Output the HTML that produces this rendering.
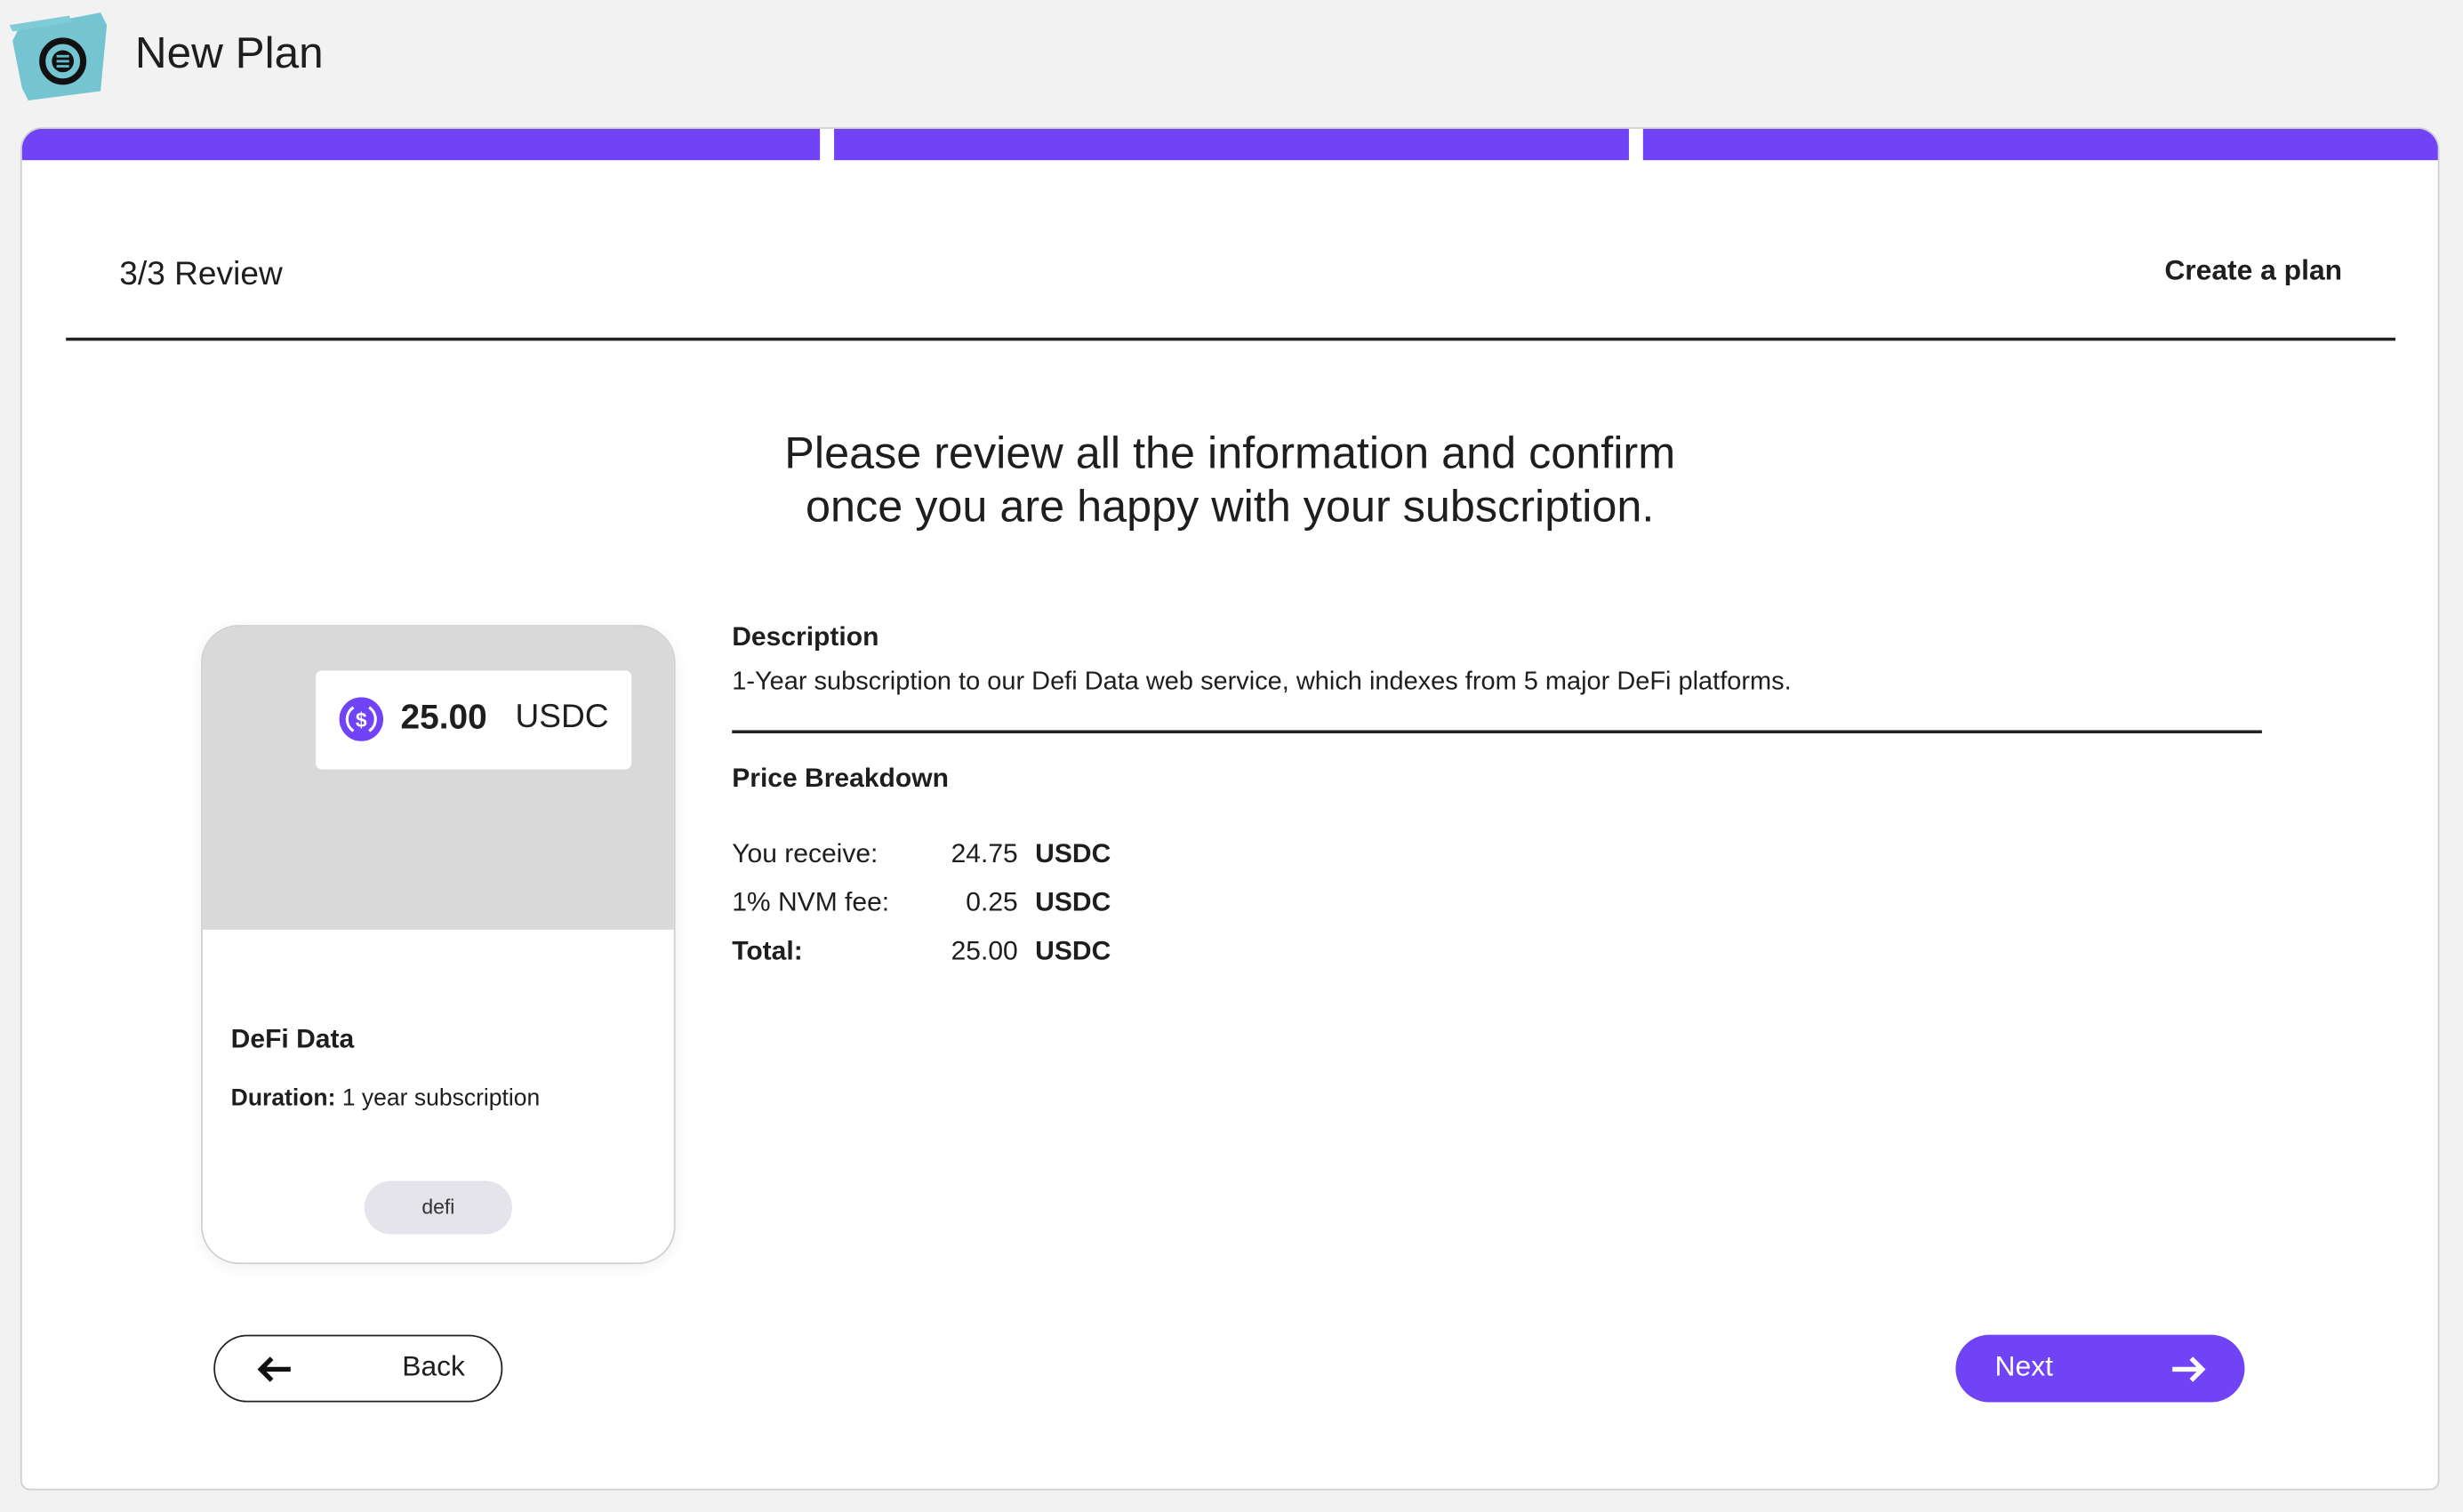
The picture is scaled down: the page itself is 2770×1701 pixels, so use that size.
<!DOCTYPE html>
<html><head><meta charset="utf-8"><style>
html,body{margin:0;padding:0;width:2770px;height:1700px;overflow:hidden;background:#f2f2f2;}
#w{position:absolute;left:0;top:0;width:1568px;height:963px;transform:scale(1.76658);transform-origin:0 0;font-family:"Liberation Sans",sans-serif;color:#1e1e1e;}
.a{position:absolute;white-space:nowrap;}
</style></head><body><div id="w">
<svg class="a" style="left:4px;top:6px" width="66" height="60" viewBox="0 0 66 60">
<path d="M8 12 L60 2 L64 10 L60 52 L14 58 L10 50 L4 20 Z" fill="#5fbccb" opacity=".85"/>
<path d="M2 10 L40 4 L42 8 L4 14Z" fill="#7fcbd6"/>
<circle cx="36" cy="33" r="13" fill="none" stroke="#111" stroke-width="4"/>
<circle cx="36" cy="33" r="7" fill="#111"/>
<rect x="32" y="29" width="8" height="1.6" fill="#5fbccb"/><rect x="32" y="32.2" width="8" height="1.6" fill="#5fbccb"/><rect x="32" y="35.4" width="8" height="1.6" fill="#5fbccb"/>
</svg>
<div class="a" style="left:86px;top:18px;font-size:28px;">New Plan</div>
<div class="a" style="left:13px;top:81px;width:1538px;height:866px;background:#fff;border:1px solid #cfcfcf;border-radius:14px 14px 6px 6px;overflow:hidden;">
<div class="a" style="left:0;top:0;width:508px;height:20px;background:#7043f6"></div>
<div class="a" style="left:517px;top:0;width:506px;height:20px;background:#7043f6"></div>
<div class="a" style="left:1032px;top:0;width:510px;height:20px;background:#7043f6"></div>
</div>
<div class="a" style="left:76px;top:163px;font-size:21px;">3/3 Review</div>
<div class="a" style="left:1378px;top:162px;font-size:18px;font-weight:bold;">Create a plan</div>
<div class="a" style="left:42px;top:215px;width:1483px;height:2px;background:#222"></div>
<div class="a" style="left:383px;top:272px;width:800px;text-align:center;font-size:28.5px;line-height:34px;white-space:normal;">Please review all the information and confirm<br>once you are happy with your subscription.</div>
<div class="a" style="left:128px;top:398px;width:300px;height:405px;border:1px solid #d0d0d0;border-radius:24px;overflow:hidden;background:#fff;box-shadow:0 2px 10px rgba(0,0,0,.06);">
<div class="a" style="left:0;top:0;width:300px;height:193px;background:#d9d9d9"></div>
<div class="a" style="left:72px;top:28px;width:201px;height:63px;background:#fff;border-radius:4px;"></div>
<svg class="a" style="left:87px;top:45px" width="28" height="28" viewBox="0 0 28 28"><circle cx="14" cy="14" r="14" fill="#7043f6"/><path d="M9 6.5 A9 9 0 0 0 9 21.5 M19 6.5 A9 9 0 0 1 19 21.5" fill="none" stroke="#fff" stroke-width="1.8"/><text x="14" y="19" text-anchor="middle" font-size="13" font-weight="bold" fill="#fff" font-family="Liberation Sans">$</text></svg>
<div class="a" style="left:126px;top:45px;font-size:22px;font-weight:bold;">25.00</div>
<div class="a" style="left:199px;top:46px;font-size:21px;">USDC</div>
<div class="a" style="left:18px;top:253px;font-size:17px;font-weight:bold;">DeFi Data</div>
<div class="a" style="left:18px;top:292px;font-size:15px;"><b>Duration:</b> 1 year subscription</div>
<div class="a" style="left:103px;top:353px;width:94px;height:34px;border-radius:17px;background:#e4e4ea;font-size:13px;line-height:34px;text-align:center;color:#333">defi</div>
</div>
<div class="a" style="left:466px;top:396px;font-size:17px;font-weight:bold;">Description</div>
<div class="a" style="left:466px;top:425px;font-size:16.4px;">1-Year subscription to our Defi Data web service, which indexes from 5 major DeFi platforms.</div>
<div class="a" style="left:466px;top:465px;width:974px;height:2px;background:#222"></div>
<div class="a" style="left:466px;top:486px;font-size:17px;font-weight:bold;">Price Breakdown</div>
<div class="a" style="left:466px;top:528px;font-size:17px;line-height:31px;">You receive:<br>1% NVM fee:<br><b>Total:</b></div>
<div class="a" style="left:568px;top:528px;width:80px;text-align:right;font-size:17px;line-height:31px;">24.75<br>0.25<br>25.00</div>
<div class="a" style="left:659px;top:528px;font-size:17px;line-height:31px;font-weight:bold;">USDC<br>USDC<br>USDC</div>
<div class="a" style="left:136px;top:850px;width:182px;height:41px;border:1.5px solid #222;border-radius:22px;"></div>
<svg class="a" style="left:162px;top:862px" width="26" height="20" viewBox="0 0 26 20"><path d="M23 10 H4 M11 3 L4 10 L11 17" fill="none" stroke="#111" stroke-width="3"/></svg>
<div class="a" style="left:256px;top:860px;font-size:18px;">Back</div>
<div class="a" style="left:1245px;top:850px;width:184px;height:43px;background:#7043f6;border-radius:22px;"></div>
<div class="a" style="left:1270px;top:860px;font-size:18px;color:#fff;">Next</div>
<svg class="a" style="left:1380px;top:862px" width="26" height="20" viewBox="0 0 26 20"><path d="M3 10 H22 M15 3 L22 10 L15 17" fill="none" stroke="#fff" stroke-width="3"/></svg>
</div></body></html>
